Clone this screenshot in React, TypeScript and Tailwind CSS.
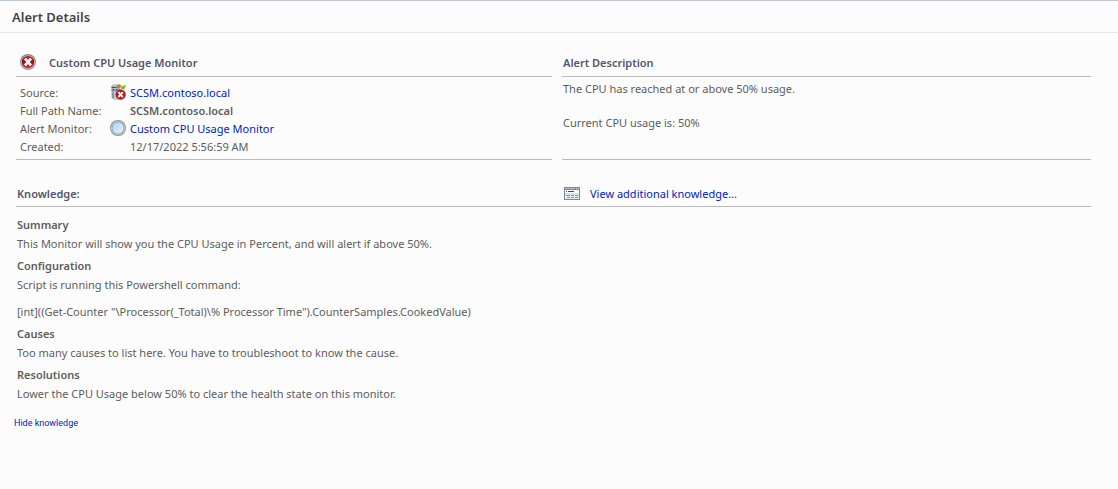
import type { ReactNode } from "react";

function CriticalIcon({ className }: { className: string }) {
  return (
    <svg viewBox="0 0 16 16" className={className} aria-hidden="true">
      <defs>
        <linearGradient id="ring" x1="0" y1="0" x2="0" y2="1">
          <stop offset="0" stopColor="#7f8488" />
          <stop offset="1" stopColor="#9b9fa2" />
        </linearGradient>
        <linearGradient id="red" x1="0" y1="0" x2="0" y2="1">
          <stop offset="0" stopColor="#c8373c" />
          <stop offset="0.5" stopColor="#a3080d" />
          <stop offset="1" stopColor="#e02a2a" />
        </linearGradient>
      </defs>
      <circle cx="8" cy="8" r="8" fill="url(#ring)" />
      <circle cx="8" cy="8" r="6.8" fill="#c6c9cb" />
      <circle cx="8" cy="8" r="6.2" fill="url(#red)" />
      <path d="M5 4.6 L11 11.4 M11 4.6 L5 11.4" stroke="#fff" strokeWidth="2.7" />
    </svg>
  );
}

function ServerIcon() {
  return (
    <svg viewBox="0 0 16 16" className="h-4 w-4" aria-hidden="true">
      <path d="M1.5 1.5 L4 0.5 H10 V15.5 H4 L1.5 13.5 Z" fill="#a3abb3" />
      <path d="M4 0.5 H10 V15.5 H4 Z" fill="#c3c9cf" />
      <path d="M1.5 3.5 H8 M1.5 6 H8" stroke="#48515c" strokeWidth="1" />
      <path d="M2 9 H4 V15 L2 13.5 Z" fill="#8b949d" />
      <path d="M7 1 Q9.2 -0.2 11.2 1 L10.4 4.1 Q8.6 3.4 6.2 4.4 Z" fill="#ef6a24" />
      <path d="M11.7 1.4 Q13.6 2.4 16 1 L15 4.6 Q12.8 5.5 10.9 4.4 Z" fill="#7dbb32" />
      <path d="M6 5 Q8.4 4.2 10.2 5 L9.5 7.5 H5.4 Z" fill="#2f8fe0" />
      <path d="M10.8 5.1 Q12.6 6 14.8 5.2 L14 7.5 H10.1 Z" fill="#f6c02c" />
      <circle cx="10.6" cy="10.6" r="5.4" fill="#a9a2a3" />
      <circle cx="10.6" cy="10.6" r="4.9" fill="#b5161b" />
      <path d="M8.4 8.2 L12.8 13 M12.8 8.2 L8.4 13" stroke="#fff" strokeWidth="1.9" />
    </svg>
  );
}

function UnmonitoredIcon() {
  return (
    <svg viewBox="0 0 16 16" className="h-4 w-4" aria-hidden="true">
      <defs>
        <linearGradient id="glass" x1="0" y1="0" x2="1" y2="1">
          <stop offset="0" stopColor="#b4d1f2" />
          <stop offset="1" stopColor="#e6f3fe" />
        </linearGradient>
      </defs>
      <circle cx="8" cy="8" r="8" fill="#8b939b" />
      <circle cx="8" cy="8" r="7.1" fill="#c3cbd2" />
      <circle cx="8" cy="8" r="6.2" fill="#8aa5c1" />
      <circle cx="8" cy="8" r="5.5" fill="url(#glass)" />
    </svg>
  );
}

function KnowledgeIcon() {
  return (
    <svg viewBox="0 0 16 13" className="h-[13px] w-4" shapeRendering="crispEdges" aria-hidden="true">
      <rect width="16" height="13" fill="#7d8791" />
      <rect x="1" y="1" width="10" height="1" fill="#b4bfca" />
      <path d="M12 1h1v1h-1z M14 1h1v1h-1z" fill="#e4eaf0" />
      <rect x="1" y="3" width="14" height="3" fill="#fbfdff" />
      <path d="M2 4h1v1H2z M4 4h6v1H4z" fill="#454c54" />
      <rect x="1" y="6" width="14" height="2" fill="#cfe6f5" />
      <rect x="1" y="8" width="14" height="4" fill="#e8eff4" />
      <path d="M2 8h4v1H2z M7 8h3v1H7z M11 8h3v1h-3z M3 10h3v1H3z M7 10h3v1H7z M11 10h3v1h-3z" fill="#8a9096" />
    </svg>
  );
}

function Row({ label, icon, children }: { label: string; icon?: ReactNode; children: ReactNode }) {
  return (
    <div className="flex h-[18px] items-center">
      <dt className="w-[90px] shrink-0">{label}</dt>
      <dd className="flex items-center">
        <span className="flex w-5 justify-start">{icon}</span>
        {children}
      </dd>
    </div>
  );
}

function Article({ title, children }: { title: string; children: ReactNode }) {
  return (
    <section className="mb-[3px]">
      <h3 className="font-semibold">{title}</h3>
      {children}
    </section>
  );
}

const link = "text-[#0022c8] hover:underline";
const heading = "font-semibold text-[#53536e]";

export default function App() {
  return (
    <main className="min-h-screen border-t border-[#bfc3d2] bg-[#fcfcfc] font-['Noto_Sans','Open_Sans',sans-serif] text-[11px] leading-[19px] text-[#5c5c5c]">
      <header className="border-b border-[#e9e9ec] px-3 pt-1.5 pb-[5px]">
        <h1 className="text-[13px] leading-5 font-semibold text-[#444448]">Alert Details</h1>
      </header>

      <div className="pr-[27px] pl-4">
        <div className="grid grid-cols-[536fr_529fr] gap-x-2.5 pt-4">
          <section className="flex flex-col border-b border-[#bababa]">
            <div className="flex h-7 items-center gap-[13px] border-b border-[#bababa] pb-px pl-1">
              <CriticalIcon className="h-4 w-4" />
              <h2 className={heading}>Custom CPU Usage Monitor</h2>
            </div>
            <dl className="pt-1.5 pb-1 pl-1">
              <Row label="Source:" icon={<ServerIcon />}>
                <a href="#source" className={link}>SCSM.contoso.local</a>
              </Row>
              <Row label="Full Path Name:">
                <strong className="font-semibold">SCSM.contoso.local</strong>
              </Row>
              <Row label="Alert Monitor:" icon={<UnmonitoredIcon />}>
                <a href="#monitor" className={link}>Custom CPU Usage Monitor</a>
              </Row>
              <Row label="Created:">12/17/2022 5:56:59 AM</Row>
            </dl>
          </section>

          <section className="border-b border-[#bababa]">
            <div className="flex h-7 items-center border-b border-[#bababa] pl-px">
              <h2 className={heading}>Alert Description</h2>
            </div>
            <div className="space-y-[17px] pt-[3px] pl-px leading-[17px]">
              <p>The CPU has reached at or above 50% usage.</p>
              <p>Current CPU usage is: 50%</p>
            </div>
          </section>
        </div>

        <div className="mt-5 grid h-[27px] grid-cols-[536fr_529fr] items-center gap-x-2.5 border-b border-[#bababa]">
          <h2 className={`pl-px ${heading}`}>Knowledge:</h2>
          <div className="flex items-center gap-2.5 pl-0.5">
            <KnowledgeIcon />
            <a href="#knowledge" className={link}>View additional knowledge...</a>
          </div>
        </div>

        <div className="pt-2 pl-px">
          <Article title="Summary">
            <p>This Monitor will show you the CPU Usage in Percent, and will alert if above 50%.</p>
          </Article>
          <Article title="Configuration">
            <p>Script is running this Powershell command:</p>
            <p className="mt-2">{'[int]((Get-Counter "\\Processor(_Total)\\% Processor Time").CounterSamples.CookedValue)'}</p>
          </Article>
          <Article title="Causes">
            <p>Too many causes to list here. You have to troubleshoot to know the cause.</p>
          </Article>
          <Article title="Resolutions">
            <p>Lower the CPU Usage below 50% to clear the health state on this monitor.</p>
          </Article>
        </div>
      </div>

      <button type="button" className="mt-3 ml-3.5 block cursor-pointer font-[Roboto,sans-serif] text-[9px] leading-4 text-[#0022c8]">
        Hide knowledge
      </button>
    </main>
  );
}
